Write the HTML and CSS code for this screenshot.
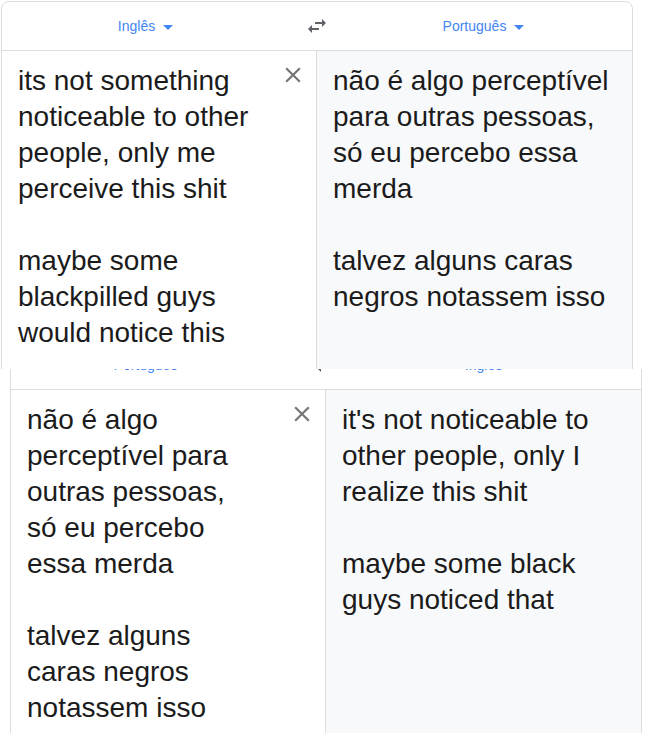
FILE: index.html
```html
<!DOCTYPE html>
<html lang="pt">
<head>
  <meta charset="UTF-8">
  <title>Tradutor</title>
  <link rel="stylesheet" href="styles.css">
</head>
<body>

  <!-- primeira captura: inglês -> português -->
  <div class="shot shot-top">
    <div class="card">
      <div class="lang-bar">
        <div class="lang">Inglês<span class="caret"></span></div>
        <div class="swap">
          <svg width="24" height="24" viewBox="0 0 24 24"><path d="M6.99 11L3 15l3.99 4v-3H14v-2H6.99v-3zM21 9l-3.99-4v3H10v2h7.01v3L21 9z"/></svg>
        </div>
        <div class="lang">Português<span class="caret"></span></div>
      </div>
      <div class="panes">
        <div class="pane source">
          <div class="text">its not something<br>noticeable to other<br>people, only me<br>perceive this shit<br><br>maybe some<br>blackpilled guys<br>would notice this</div>
          <button class="clear">
            <svg width="26" height="26" viewBox="0 0 24 24"><path d="M19 6.41L17.59 5 12 10.59 6.41 5 5 6.41 10.59 12 5 17.59 6.41 19 12 13.41 17.59 19 19 17.59 13.41 12z"/></svg>
          </button>
        </div>
        <div class="pane target">
          <div class="text">não é algo perceptível<br>para outras pessoas,<br>só eu percebo essa<br>merda<br><br>talvez alguns caras<br>negros notassem isso</div>
        </div>
      </div>
    </div>
  </div>

  <!-- segunda captura: português -> inglês -->
  <div class="shot shot-bottom">
    <div class="card">
      <div class="lang-bar">
        <div class="lang">Português<span class="caret"></span></div>
        <div class="swap">
          <svg width="24" height="24" viewBox="0 0 24 24"><path d="M6.99 11L3 15l3.99 4v-3H14v-2H6.99v-3zM21 9l-3.99-4v3H10v2h7.01v3L21 9z"/></svg>
        </div>
        <div class="lang">Inglês<span class="caret"></span></div>
      </div>
      <div class="panes">
        <div class="pane source">
          <div class="text">não é algo<br>perceptível para<br>outras pessoas,<br>só eu percebo<br>essa merda<br><br>talvez alguns<br>caras negros<br>notassem isso</div>
          <button class="clear">
            <svg width="26" height="26" viewBox="0 0 24 24"><path d="M19 6.41L17.59 5 12 10.59 6.41 5 5 6.41 10.59 12 5 17.59 6.41 19 12 13.41 17.59 19 19 17.59 13.41 12z"/></svg>
          </button>
        </div>
        <div class="pane target">
          <div class="text">it's not noticeable to<br>other people, only I<br>realize this shit<br><br>maybe some black<br>guys noticed that</div>
        </div>
      </div>
    </div>
  </div>

</body>
</html>
```

FILE: styles.css
```css
body {
  margin: 0;
  background-color: #fff;
  font-family: "Liberation Sans", Arial, sans-serif;
}

/* cada captura é recortada */
.shot {
  overflow: hidden;
}

.shot-top {
  height: 369px;
  padding-left: 1px;
  padding-top: 1px;
  box-sizing: border-box;
}

.shot-bottom {
  height: 364px;
  padding-left: 10px;
}

.shot-bottom .card {
  margin-top: -29px;
}

.card {
  width: 632px;
  box-sizing: border-box;
  border: 1px solid #dadce0;
  border-radius: 8px 8px 0 0;
  background-color: #fff;
}

/* barra de idiomas */
.lang-bar {
  display: flex;
  align-items: center;
  height: 48px;
  border-bottom: 1px solid #dadce0;
}

.lang {
  flex: 1 1 0;
  min-width: 0;
  display: flex;
  justify-content: center;
  align-items: center;
  font-size: 14px;
  color: #4285f4;
}

.caret {
  width: 0;
  height: 0;
  margin-left: 8px;
  margin-top: 2px;
  border-left: 5px solid transparent;
  border-right: 5px solid transparent;
  border-top: 5px solid #4285f4;
}

.lang:last-child .caret {
  margin-right: 10px;
}

.swap {
  width: 56px;
  display: flex;
  justify-content: center;
  align-items: center;
}

.swap svg {
  fill: #5f6368;
  display: block;
}

/* áreas de texto */
.panes {
  display: flex;
}

.pane {
  width: 50%;
  min-height: 340px;
  box-sizing: border-box;
  padding: 12px 16px 16px 16px;
  font-size: 28px;
  line-height: 36px;
  color: #1b1b1b;
}

.source {
  display: flex;
  align-items: flex-start;
  justify-content: space-between;
  padding-right: 10px;
  border-right: 1px solid #dadce0;
}

.source .text {
  width: 233px;
}

.target {
  background-color: #f8f9fa;
}

.clear {
  border: none;
  background: none;
  padding: 0;
  margin-top: -1px;
  cursor: pointer;
}

.clear svg {
  display: block;
  fill: #757575;
}
```
